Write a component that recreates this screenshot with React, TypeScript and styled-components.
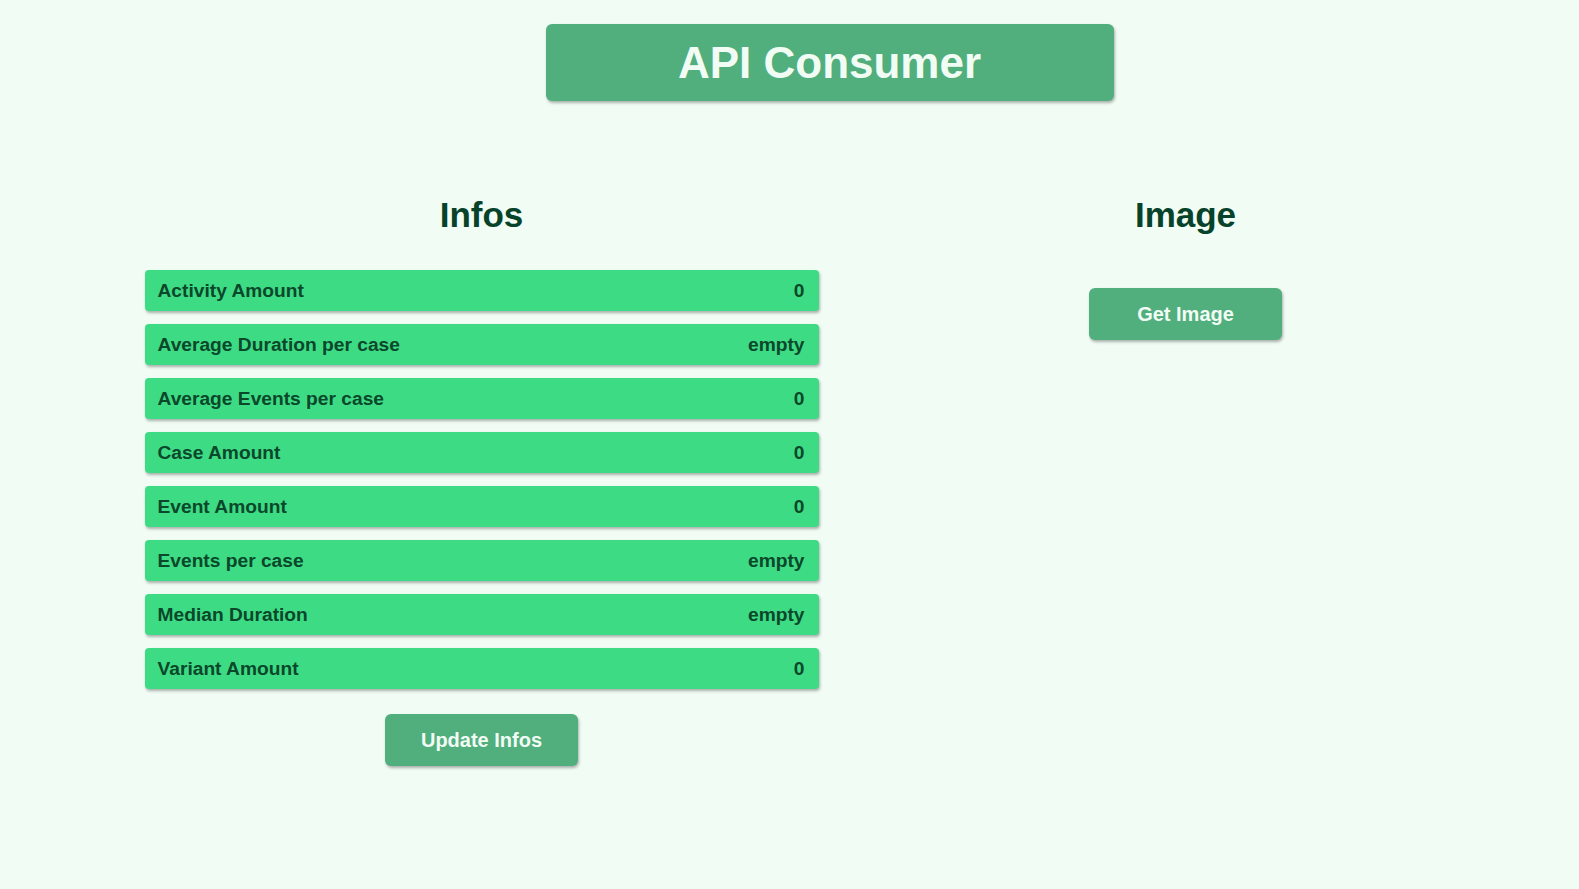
import styled, { createGlobalStyle } from 'styled-components';

const GlobalStyle = createGlobalStyle`
	body {
		margin: 0;
		background: #f1fcf4;
		font-family: 'Liberation Sans', Arial, sans-serif;
	}
`;

const Page = styled.div`
	padding: 24px 0 60px 80px;
`;

const TitleBar = styled.header`
	width: 568px;
	height: 77px;
	margin: 0 auto;
	display: flex;
	align-items: center;
	justify-content: center;
	background: #51ae7d;
	border-radius: 6px;
	box-shadow: 1px 2px 3px rgba(0, 0, 0, 0.3);
`;

const Title = styled.h1`
	margin: 0;
	font-size: 44px;
	font-weight: 700;
	color: #f1fcf4;
`;

const Columns = styled.main`
	display: grid;
	grid-template-columns: 704px 704px;
	justify-content: center;
	margin-top: 94px;
	padding-left: 8px;
`;

const Column = styled.section`
	display: flex;
	flex-direction: column;
	align-items: center;
`;

const Heading = styled.h2`
	margin: 0;
	font-size: 35px;
	line-height: 40px;
	font-weight: 700;
	color: #06432a;
`;

const InfoList = styled.ul`
	list-style: none;
	margin: 35px 0 0;
	padding: 0;
	width: 674px;
	display: flex;
	flex-direction: column;
	gap: 13px;
`;

const InfoRow = styled.li`
	height: 41px;
	padding: 0 14px 0 13px;
	display: flex;
	align-items: center;
	justify-content: space-between;
	background: #3ddc84;
	border-radius: 4px;
	box-shadow: 1px 2px 3px rgba(0, 0, 0, 0.3);
	font-size: 19.2px;
	font-weight: 700;
	color: #0b472a;
`;

const ActionButton = styled.button<{ top: number }>`
	all: unset;
	box-sizing: border-box;
	width: 193px;
	height: 52px;
	margin-top: ${({ top }) => top}px;
	display: flex;
	align-items: center;
	justify-content: center;
	background: #51ae7d;
	border-radius: 6px;
	box-shadow: 1px 2px 3px rgba(0, 0, 0, 0.3);
	font-family: 'Liberation Sans', Arial, sans-serif;
	font-size: 20px;
	font-weight: 700;
	color: #f1fcf4;
	cursor: pointer;
`;

const infos: [string, string][] = [
	['Activity Amount', '0'],
	['Average Duration per case', 'empty'],
	['Average Events per case', '0'],
	['Case Amount', '0'],
	['Event Amount', '0'],
	['Events per case', 'empty'],
	['Median Duration', 'empty'],
	['Variant Amount', '0'],
];

const App = (): JSX.Element => {
	return (
		<>
			<GlobalStyle />
			<Page>
				<TitleBar>
					<Title>API Consumer</Title>
				</TitleBar>
				<Columns>
					<Column>
						<Heading>Infos</Heading>
						<InfoList>
							{infos.map(([label, value]) => (
								<InfoRow key={label}>
									<span>{label}</span>
									<span>{value}</span>
								</InfoRow>
							))}
						</InfoList>
						<ActionButton top={25}>Update Infos</ActionButton>
					</Column>
					<Column>
						<Heading>Image</Heading>
						<ActionButton top={53}>Get Image</ActionButton>
					</Column>
				</Columns>
			</Page>
		</>
	);
};

export default App;
